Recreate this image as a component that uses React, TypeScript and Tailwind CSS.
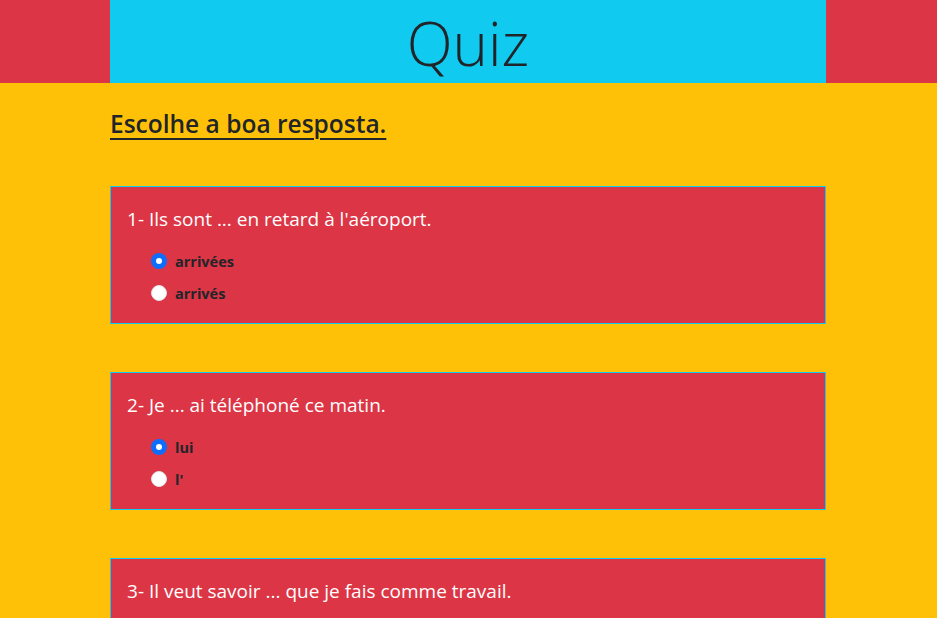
const questions = [
  { n: 1, text: "Ils sont ... en retard à l'aéroport.", options: ["arrivées", "arrivés"] },
  { n: 2, text: "Je ... ai téléphoné ce matin.", options: ["lui", "l'"] },
  { n: 3, text: "Il veut savoir ... que je fais comme travail.", options: ["ce", "qu'"] },
];

function Radio({ checked }: { checked: boolean }) {
  return checked ? (
    <span className="w-4 h-4 rounded-full bg-[#0d6efd] flex items-center justify-center shrink-0">
      <span className="w-[6px] h-[6px] rounded-full bg-white" />
    </span>
  ) : (
    <span className="w-4 h-4 rounded-full bg-white border border-[#dee2e6] shrink-0" />
  );
}

export default function App() {
  return (
    <div className="min-h-screen bg-[#ffc107] font-['Open_Sans',sans-serif] text-[#212529]">
      {/* Header */}
      <header className="bg-[#dc3545]">
        <div className="w-[716px] ml-[110px] h-[83px] bg-[#10caf0] flex items-center justify-center">
          <h1 className="text-[60px] font-light leading-none text-[#212529] pt-[2px]">Quiz</h1>
        </div>
      </header>

      <main className="w-[716px] ml-[110px]">
        <h3 className="pt-[26px] text-[24.5px] leading-[1.2] font-semibold underline underline-offset-[5px] decoration-2">
          Escolhe a boa resposta.
        </h3>

        <div className="mt-[48px] flex flex-col gap-[48px]">
          {questions.map((q) => (
            <div key={q.n} className="bg-[#dc3545] border border-[#10caf0] px-4 pt-[18px] pb-[14px]">
              <p className="text-[19px] leading-[28px] text-white">
                {q.n}- {q.text}
              </p>
              <div className="mt-[12px] ml-6 flex flex-col">
                {q.options.map((o, i) => (
                  <label key={o} className="h-8 flex items-center gap-2 text-[14.5px] font-bold">
                    <Radio checked={i === 0} />
                    {o}
                  </label>
                ))}
              </div>
            </div>
          ))}
        </div>
      </main>
    </div>
  );
}
